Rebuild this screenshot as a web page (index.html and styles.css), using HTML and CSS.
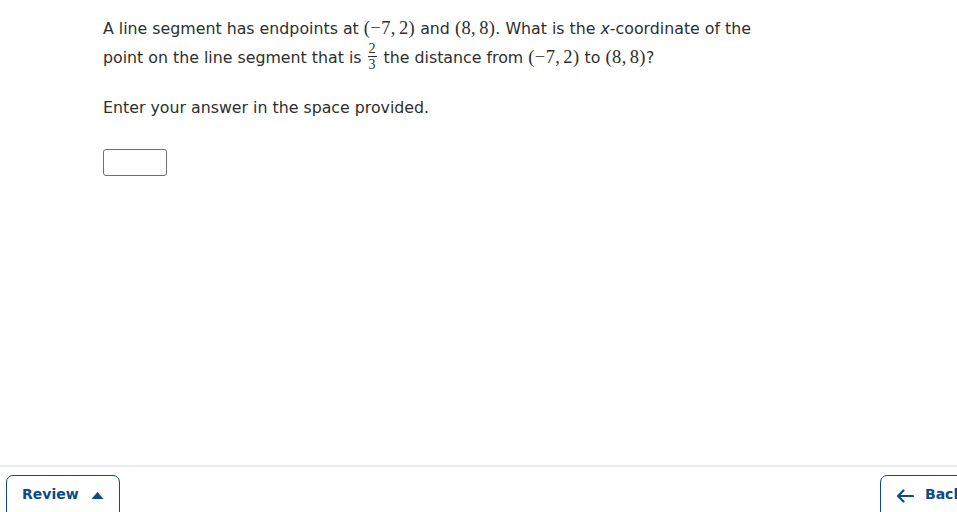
FILE: index.html
```html
<!DOCTYPE html>
<html>
<head>
<meta charset="utf-8">
<link rel="stylesheet" href="styles.css">
</head>
<body>
<div class="page">
  <main class="content">
    <p class="question">A line segment has endpoints at <span class="m">(−7,<span class="ts"></span>2)</span> and <span class="m">(8,<span class="ts"></span>8)</span>. What is the <i>x</i>-coordinate of the point on the line segment that is <span class="frac"><span class="num">2</span><span class="den">3</span></span> the distance from <span class="m">(−7,<span class="ts"></span>2)</span> to <span class="m">(8,<span class="ts"></span>8)</span>?</p>
    <p class="prompt">Enter your answer in the space provided.</p>
    <input class="answer" type="text" aria-label="answer">
  </main>
  <footer class="footer">
    <button class="btn review">Review <svg width="13" height="9" viewBox="0 0 13 9"><path d="M6.5 1 L12.5 8 L0.5 8 Z" fill="#0b4a8c"/></svg></button>
    <button class="btn back"><svg width="18" height="14" viewBox="0 0 18 14"><path d="M17 7 H2 M7.5 1.5 L2 7 L7.5 12.5" fill="none" stroke="#0b4a8c" stroke-width="2.2" stroke-linecap="round" stroke-linejoin="round"/></svg> Back</button>
  </footer>
</div>
</body>
</html>
```
FILE: styles.css
```css
html, body {
  margin: 0;
  padding: 0;
  background: #fff;
  overflow: hidden;
}
.page {
  height: 512px;
  display: flex;
  flex-direction: column;
  font-family: "DejaVu Sans", "Liberation Sans", sans-serif;
  color: #2e2e2e;
}
.content {
  flex: 1;
  padding: 14px 0 0 103px;
}
.question {
  margin: 0;
  width: 662px;
  font-size: 15.8px;
  line-height: 28px;
}
.m {
  font-family: "Liberation Serif", "DejaVu Serif", serif;
  font-size: 18.5px;
  letter-spacing: 0.4px;
}
.ts {
  display: inline-block;
  width: 3px;
}
.frac {
  display: inline-flex;
  flex-direction: column;
  align-items: center;
  vertical-align: middle;
  font-family: "Liberation Serif", serif;
  font-size: 14px;
  line-height: 12px;
  margin: -4px 2px 0 1px;
}
.num {
  border-bottom: 1px solid #2e2e2e;
  padding: 0 1px 1px;
}
.den {
  padding-top: 2px;
}
.prompt {
  margin: 24px 0 0;
  font-size: 15.8px;
  line-height: 24px;
}
.answer {
  display: block;
  margin-top: 29px;
  width: 64px;
  height: 27px;
  box-sizing: border-box;
  border: 1px solid #6b6f76;
  border-radius: 3px;
  padding: 0;
}
.footer {
  border-top: 2px solid #e8ebef;
  height: 47px;
  display: flex;
  justify-content: space-between;
  align-items: flex-start;
  padding: 8px 0 0 6px;
  box-sizing: border-box;
  overflow: hidden;
}
.btn {
  height: 44px;
  border: 1px solid #0b4a8c;
  border-radius: 7px;
  background: #fff;
  color: #0b4a8c;
  font-family: "DejaVu Sans", "Liberation Sans", sans-serif;
  font-weight: 700;
  font-size: 14px;
  display: flex;
  align-items: flex-start;
  padding: 10px 0 0 15px;
  gap: 12px;
  box-sizing: border-box;
}
.review {
  width: 114px;
}
.review svg {
  margin-top: 5px;
}
.back {
  width: 100px;
  margin-right: -23px;
  gap: 11px;
}
.back svg {
  margin-top: 3px;
}
```
